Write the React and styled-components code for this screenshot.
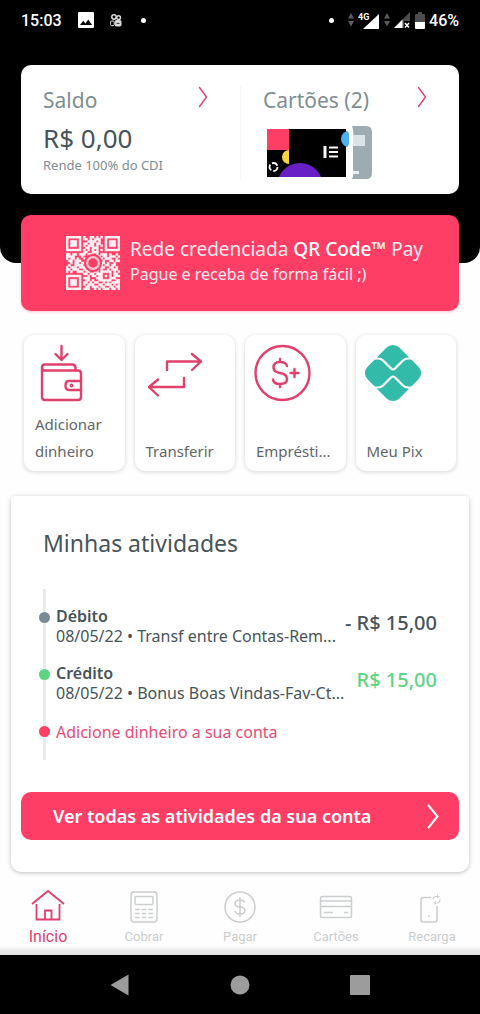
import React from "react";
import styled, { createGlobalStyle, ThemeProvider } from "styled-components";

const theme = {
  colors: {
    pink: "#ff3e66",
    icon: "#e0406c",
    dark: "#47545a",
    gray: "#808d91",
    text: "#636669",
    muted: "#cbcdce",
    green: "#5fd384",
    slate: "#7b8997",
    line: "#e9eaec",
    page: "#fefefe",
  },
};

const GlobalStyle = createGlobalStyle`
  * {
    box-sizing: border-box;
  }

  body {
    margin: 0;
    background: ${theme.colors.page};
    font-family: "Noto Sans", "Open Sans", sans-serif;
  }

  button {
    border: 0;
    padding: 0;
    font: inherit;
    text-align: left;
    cursor: pointer;
  }

  a {
    text-decoration: none;
  }

  h1, h2, p, ul {
    margin: 0;
    padding: 0;
  }

  svg {
    display: block;
    flex-shrink: 0;
  }
`;

const Header = styled.header`
  background: black;
  border-radius: 0 0 16px 16px;
  padding: 0 21px 69px;
`;

const StatusBar = styled.div`
  display: flex;
  align-items: center;
  justify-content: space-between;
  height: 40px;
  margin-bottom: 25px;
  color: white;
  font-family: Roboto, sans-serif;
  font-size: 16px;
  font-weight: 500;
`;

const StatusGroup = styled.div`
  display: flex;
  align-items: center;
  gap: ${({ $gap }) => $gap}px;
`;

const StatusDot = styled.span`
  width: 5px;
  height: 5px;
  border-radius: 50%;
  background: white;
  margin: 0 ${({ $space }) => $space}px;
`;

const Summary = styled.section`
  display: grid;
  grid-template-columns: 1fr 1fr;
  height: 129px;
  padding: 21px 0;
  background: white;
  border-radius: 10px;
`;

const SummaryItem = styled.a`
  display: flex;
  flex-direction: column;
  padding: 0 32px 0 22px;
  border-left: ${({ $side }) => ($side === "left" ? 0 : 1)}px solid #f5f6f7;
`;

const SummaryTop = styled.div`
  display: flex;
  align-items: flex-start;
  justify-content: space-between;
`;

const SummaryTitle = styled.h2`
  color: ${({ theme }) => theme.colors.gray};
  font-size: 21px;
  font-weight: 400;
  line-height: 28px;
`;

const Balance = styled.p`
  margin-top: 6px;
  color: ${({ theme }) => theme.colors.dark};
  font-size: 26px;
  line-height: 36px;
`;

const Yield = styled.p`
  color: ${({ theme }) => theme.colors.gray};
  font-size: 13px;
  line-height: 18px;
`;

const CardArt = styled.svg`
  margin: 11px 0 0 4px;
`;

const Banner = styled.a`
  display: flex;
  align-items: center;
  gap: 10px;
  height: 96px;
  margin: -48px 21px 24px;
  padding: 0 20px 0 45px;
  background: ${({ theme }) => theme.colors.pink};
  border-radius: 10px;
  box-shadow: 0 1px 3px rgba(255, 62, 102, 0.3);
  color: #ffe9ee;
`;

const BannerBody = styled.div`
  padding-bottom: 4px;
  white-space: nowrap;
`;

const BannerTitle = styled.p`
  font-size: 19px;
  line-height: 26px;

  strong {
    color: white;
    font-weight: 500;
  }
`;

const BannerText = styled.p`
  font-size: 16px;
  line-height: 24px;
`;

const Actions = styled.nav`
  display: grid;
  grid-template-columns: repeat(4, 1fr);
  gap: 10px;
  margin: 0 24px 25px;
`;

const ActionButton = styled.button`
  display: flex;
  flex-direction: column;
  justify-content: space-between;
  min-width: 0;
  height: 136px;
  padding: 8px 8px 6px;
  background: white;
  border-radius: 10px;
  box-shadow: 0 1px 4px rgba(40, 30, 50, 0.18);
  color: ${({ theme }) => theme.colors.text};
  font-size: 15px;
  line-height: 27px;

  span {
    padding-left: 3px;
  }
`;

const Activities = styled.section`
  margin: 0 11px;
  padding: 0 10px 32px;
  background: white;
  border-radius: 4px 4px 10px 10px;
  box-shadow: 0 1px 4px rgba(30, 30, 40, 0.28);
`;

const ActivitiesTitle = styled.h1`
  padding: 30px 22px 29px;
  color: ${({ theme }) => theme.colors.dark};
  font-size: 23px;
  font-weight: 400;
  line-height: 34px;
`;

const Timeline = styled.ul`
  list-style: none;
  margin: 0 22px 32px;
  padding: 17px 0 16px 10px;
  border-left: 3px solid ${({ theme }) => theme.colors.line};
`;

const TimelineItem = styled.li`
  position: relative;
  display: flex;
  justify-content: space-between;
  height: ${({ $last }) => ($last ? 24 : 40)}px;
  margin-bottom: ${({ $last }) => ($last ? 0 : 17)}px;
  color: ${({ theme }) => theme.colors.dark};
  font-size: 16px;
  line-height: 20px;
  white-space: nowrap;

  &::before {
    content: "";
    position: absolute;
    left: -17px;
    top: 6px;
    width: 11px;
    height: 11px;
    border-radius: 50%;
    background: ${({ theme, $dot }) => theme.colors[$dot]};
  }

  strong {
    display: block;
    font-weight: 600;
  }

  a {
    color: #e84b74;
    line-height: 24px;
  }
`;

const Amount = styled.span`
  color: ${({ theme, $credit }) =>
    $credit ? theme.colors.green : theme.colors.dark};
  font-size: 20px;
  font-weight: 500;
  line-height: 34px;
`;

const AllButton = styled.button`
  display: flex;
  align-items: center;
  justify-content: space-between;
  width: 100%;
  height: 48px;
  padding: 0 20px 0 32px;
  background: ${({ theme }) => theme.colors.pink};
  border-radius: 10px;
  color: white;
  font-size: 18px;
  font-weight: 600;
  white-space: nowrap;
`;

const TabBar = styled.nav`
  display: grid;
  grid-template-columns: repeat(5, 1fr);
  height: 83px;
  padding-top: 15px;
  background: linear-gradient(
    transparent 74px,
    #ececec 78px,
    #e2e2e2 83px
  );
`;

const Tab = styled.a`
  display: flex;
  flex-direction: column;
  align-items: center;
  gap: 4px;
  color: ${({ theme, $active }) =>
    $active ? theme.colors.icon : theme.colors.muted};
  font-family: Roboto, sans-serif;
  font-size: ${({ $active }) => ($active ? 16 : 13)}px;
  line-height: 20px;
`;

const SystemBar = styled.footer`
  display: flex;
  align-items: center;
  justify-content: center;
  gap: 80px;
  height: 59px;
  background: black;
`;

const SystemButton = styled.button`
  display: grid;
  place-items: center;
  width: 40px;
  height: 40px;
  background: none;
`;

function Chevron({ color = "#e0406c", width = 8, height = 20, stroke = 1.4 }) {
  return (
    <svg width={width + 2} height={height + 2} viewBox={`-1 -1 ${width + 2} ${height + 2}`} fill="none" stroke={color} strokeWidth={stroke} strokeLinecap="round">
      <path d={`M0.5 0.5 L${width - 0.5} ${height / 2} L0.5 ${height - 0.5}`} />
    </svg>
  );
}

function PictureIcon() {
  return (
    <svg width="16" height="16" viewBox="0 0 16 16">
      <rect width="16" height="16" rx="1" fill="white" />
      <path d="M2 13 L5.2 8.8 L7.4 11.4 L10.3 7.5 L14 13Z" fill="black" />
    </svg>
  );
}

function CameraIcon() {
  return (
    <svg width="12" height="13" viewBox="0 0 12 13" fill="none" stroke="#ddd">
      <circle cx="4" cy="3" r="2.2" strokeWidth="1.5" />
      <circle cx="8.6" cy="3.6" r="1.9" strokeWidth="1.4" />
      <rect x="0.6" y="7" width="3.6" height="4.6" rx="1" />
      <rect x="5.2" y="6.6" width="5.8" height="5.4" rx="1" fill="#ddd" />
      <path d="M6.6 9.4h3" stroke="#333" />
    </svg>
  );
}

function DataArrows() {
  return (
    <svg width="6" height="14" viewBox="0 0 6 14" fill="#5c5c5c">
      <path d="M3 0 L6 5.5 H0Z M3 13.5 L6 8 H0Z" />
    </svg>
  );
}

function MobileSignal() {
  return (
    <svg width="22" height="17" viewBox="0 0 22 17" fill="white">
      <path d="M21 2 V17 H5Z" />
      <text x="0" y="8" fontFamily="Roboto, sans-serif" fontSize="9" fontWeight="700" stroke="black" strokeWidth="2" paintOrder="stroke">4G</text>
    </svg>
  );
}

function NoSignal() {
  return (
    <svg width="17" height="16" viewBox="0 0 17 16">
      <path d="M16 0 V9 H10 V16 H0Z" fill="#4d4d4d" />
      <path d="M8.5 7.5 V16 H0Z" fill="white" />
      <path d="M11 11 L15 15.5 M15 11 L11 15.5" stroke="white" strokeWidth="1.5" />
    </svg>
  );
}

function BatteryIcon() {
  return (
    <svg width="10" height="17" viewBox="0 0 10 17">
      <path d="M3 0 H7 V2 H9 Q10 2 10 3 V11 H0 V3 Q0 2 1 2 H3Z" fill="#4d4d4d" />
      <path d="M0 10 H10 V16 Q10 17 9 17 H1 Q0 17 0 16Z" fill="white" />
    </svg>
  );
}

function CardsPreview() {
  return (
    <CardArt width="106" height="55" viewBox="0 0 106 55">
      <defs>
        <clipPath id="front">
          <rect y="4" width="79" height="48" />
        </clipPath>
        <clipPath id="half">
          <rect y="4" width="22" height="48" />
        </clipPath>
      </defs>
      <path d="M85 1 H99 Q105 1 105 7 V48 Q105 54 99 54 H85 Q87 50 86 44 V14 Q87 6 85 1Z" fill="#9cacb1" />
      <rect x="86" y="10" width="12" height="11" fill="#dbe5e9" />
      <rect x="86" y="46" width="6" height="3" fill="#e8eff1" />
      <g clipPath="url(#front)">
        <rect y="4" width="80" height="48" fill="black" />
        <rect y="4" width="22" height="21" fill="#ff3e66" />
        <circle cx="33" cy="61" r="23" fill="#681fc4" />
        <circle cx="82" cy="14" r="8" fill="#4eb0f0" />
      </g>
      <path d="M79 6 Q82 6 82 10 V18 Q82 22 79 22Z" fill="#4eb0f0" />
      <circle cx="22" cy="32" r="7" fill="#f7d441" clipPath="url(#half)" />
      <circle cx="6.5" cy="42" r="4" fill="none" stroke="white" strokeWidth="1.8" strokeDasharray="6.4 2" />
      <path d="M58 21 V33" stroke="white" strokeWidth="3" />
      <path d="M62 22.5 H71 M62 27 H71 M62 31.5 H71" stroke="white" strokeWidth="2" />
    </CardArt>
  );
}

const qrRows = [
  "1111111010011010101111111",
  "1000001011010111001000001",
  "1011101000111101001011101",
  "1011101011011011001011101",
  "1011101010111010101011101",
  "1000001001101110001000001",
  "1111111010101010101111111",
  "0000000011001110000000000",
  "1101101110110010111010010",
  "1111000100000001011011101",
  "1011010010000000101110010",
  "0110111000000000010011011",
  "0010110110000000110100100",
  "0100111100000000101101100",
  "1011101110000001110011010",
  "1101110011010110100101110",
  "1010011101100110111110101",
  "0000000011011011100010110",
  "1111111000101101101010111",
  "1000001011100011100011100",
  "1011101001101001111110011",
  "1011101011010110010101111",
  "1011101010111001101110101",
  "1000001001101110110011011",
  "1111111011100101011101101",
];

function QrCode() {
  const modules = qrRows
    .map((row, y) =>
      [...row].map((bit, x) => (bit === "1" ? `M${x} ${y}h1v1h-1z` : "")).join("")
    )
    .join("");

  return (
    <svg width="54" height="54" viewBox="0 0 25 25">
      <path d={modules} fill="#fff1f4" stroke="#fff1f4" strokeWidth="0.16" />
      <circle cx="12.5" cy="12.5" r="4.2" fill={theme.colors.pink} />
      <circle cx="12.5" cy="12.5" r="2.7" fill="none" stroke="#ffc6d2" strokeWidth="1" />
    </svg>
  );
}

const outline = {
  fill: "none",
  stroke: theme.colors.icon,
  strokeWidth: 2.4,
  strokeLinecap: "round",
  strokeLinejoin: "round",
};

function WalletIcon() {
  return (
    <svg width="60" height="60" viewBox="0 0 60 60" {...outline}>
      <path d="M29.5 3 V16 M23.5 11 L29.5 17 L35.5 11" />
      <path d="M10 24 Q10 21.5 13 21.5 H40 Q43.5 21.5 43.5 25 V27.5" />
      <path d="M10 24 Q10 27.5 13 27.5 H46 Q49 27.5 49 30.5 V54 Q49 57 46 57 H13 Q10 57 10 54Z" />
      <path d="M49 38 H37 Q33.5 38 33.5 42.5 Q33.5 47 37 47 H49" />
      <circle cx="39.5" cy="42.5" r="0.8" />
    </svg>
  );
}

function TransferIcon() {
  return (
    <svg width="60" height="60" viewBox="0 0 60 60" {...outline}>
      <path d="M24 27 V18.5 H58 M49 11 L58 18.5 L49 27" />
      <path d="M41 35 V44 H6 M15 36.5 L6 44 L15 52.5" />
    </svg>
  );
}

function LoanIcon() {
  return (
    <svg width="60" height="60" viewBox="0 0 60 60" {...outline}>
      <circle cx="29.5" cy="30" r="27" />
      <path d="M34 23 Q33 19 27 19 Q20.5 19 20.5 24.5 Q20.5 29 27 30 Q34 31 34 36 Q34 41 27 41 Q20.5 41 20 36.5 M27 16 V19 M27 41 V44" />
      <path d="M37.5 30 H45.5 M41.5 26 V34" />
    </svg>
  );
}

function PixIcon() {
  return (
    <svg width="60" height="60" viewBox="0 0 60 60">
      <rect x="6.5" y="7.5" width="45" height="45" rx="9" fill="#33bba9" transform="rotate(45 29 30)" />
      <path d="M8 15.5 H14 Q17 15.5 19 17.5 L26.5 25 Q29 28 31.5 25 L39 17.5 Q41 15.5 44 15.5 H50 M8 44.5 H14 Q17 44.5 19 42.5 L26.5 35 Q29 32 31.5 35 L39 42.5 Q41 44.5 44 44.5 H50" fill="none" stroke="white" strokeWidth="2.2" />
    </svg>
  );
}

function TabIcon({ children, ...rest }) {
  return (
    <svg width="36" height="36" viewBox="0 0 36 36" fill="none" stroke="currentColor" strokeWidth="1.5" {...rest}>
      {children}
    </svg>
  );
}

const tabs = [
  {
    label: "Início",
    active: true,
    icon: (
      <TabIcon strokeWidth="1.8">
        <path d="M2 17 L18 4 L34 17 M6.5 17 V32.5 H29.5 V17 M15 32 V23.5 H21.5 V32" />
      </TabIcon>
    ),
  },
  {
    label: "Cobrar",
    icon: (
      <TabIcon>
        <rect x="5" y="5" width="26" height="30" rx="3" />
        <rect x="9" y="9.5" width="18" height="8" rx="1" />
        <path d="M9 22.5 H27 M9 26.5 H27 M9 30.5 H27" strokeDasharray="4.5 2.2" />
      </TabIcon>
    ),
  },
  {
    label: "Pagar",
    icon: (
      <TabIcon>
        <circle cx="18" cy="20" r="15" />
        <path d="M23 15.5 Q22 13 18 13 Q13 13 13 16.5 Q13 19.5 18 20 Q23 20.5 23 23.5 Q23 27 18 27 Q13.5 27 13 24 M18 10 V30" />
      </TabIcon>
    ),
  },
  {
    label: "Cartões",
    icon: (
      <TabIcon>
        <rect x="2.5" y="9.5" width="31" height="21" rx="2" />
        <path d="M3 14 H33 M3 19.5 H33 M6 25.5 H15 M26 25.5 H30" />
      </TabIcon>
    ),
  },
  {
    label: "Recarga",
    icon: (
      <TabIcon>
        <path d="M17 10.5 H9 Q7 10.5 7 12.5 V33 Q7 35 9 35 H21 Q23 35 23 33 V19 M15 28.5 V30" />
        <path d="M19 12 Q19 9.5 22 9.5 H25.5 M23.5 7.5 V11 M26 12.5 Q26 16 23 16 H19.5 M21 14 V17.5" strokeWidth="1.1" />
      </TabIcon>
    ),
  },
];

const actions = [
  { label: "Adicionar dinheiro", icon: <WalletIcon /> },
  { label: "Transferir", icon: <TransferIcon /> },
  { label: "Emprésti...", icon: <LoanIcon /> },
  { label: "Meu Pix", icon: <PixIcon /> },
];

const activities = [
  {
    title: "Débito",
    detail: "08/05/22 • Transf entre Contas-Rem...",
    amount: "- R$ 15,00",
    dot: "slate",
  },
  {
    title: "Crédito",
    detail: "08/05/22 • Bonus Boas Vindas-Fav-Ct...",
    amount: "R$ 15,00",
    dot: "green",
    credit: true,
  },
];

export default function App() {
  return (
    <ThemeProvider theme={theme}>
      <GlobalStyle />
      <Header>
        <StatusBar>
          <StatusGroup $gap={16}>
            <span>15:03</span>
            <PictureIcon />
            <CameraIcon />
            <StatusDot $space={3} />
          </StatusGroup>
          <StatusGroup $gap={4}>
            <StatusDot $space={10} />
            <DataArrows />
            <MobileSignal />
            <DataArrows />
            <NoSignal />
            <BatteryIcon />
            <span>46%</span>
          </StatusGroup>
        </StatusBar>
        <Summary>
          <SummaryItem href="#saldo" $side="left">
            <SummaryTop>
              <SummaryTitle>Saldo</SummaryTitle>
              <Chevron />
            </SummaryTop>
            <Balance>R$ 0,00</Balance>
            <Yield>Rende 100% do CDI</Yield>
          </SummaryItem>
          <SummaryItem href="#cartoes" $side="right">
            <SummaryTop>
              <SummaryTitle>Cartões (2)</SummaryTitle>
              <Chevron />
            </SummaryTop>
            <CardsPreview />
          </SummaryItem>
        </Summary>
      </Header>

      <Banner href="#qrcode">
        <QrCode />
        <BannerBody>
          <BannerTitle>
            Rede credenciada <strong>QR Code™</strong> Pay
          </BannerTitle>
          <BannerText>Pague e receba de forma fácil ;)</BannerText>
        </BannerBody>
      </Banner>

      <Actions>
        {actions.map(({ label, icon }) => (
          <ActionButton key={label} type="button">
            {icon}
            <span>{label}</span>
          </ActionButton>
        ))}
      </Actions>

      <Activities>
        <ActivitiesTitle>Minhas atividades</ActivitiesTitle>
        <Timeline>
          {activities.map(({ title, detail, amount, dot, credit }) => (
            <TimelineItem key={title} $dot={dot}>
              <div>
                <strong>{title}</strong>
                {detail}
              </div>
              <Amount $credit={credit}>{amount}</Amount>
            </TimelineItem>
          ))}
          <TimelineItem $dot="pink" $last>
            <a href="#adicionar">Adicione dinheiro a sua conta</a>
          </TimelineItem>
        </Timeline>
        <AllButton type="button">
          Ver todas as atividades da sua conta
          <Chevron color="white" width={10} height={23} stroke={2} />
        </AllButton>
      </Activities>

      <TabBar>
        {tabs.map(({ label, icon, active }) => (
          <Tab key={label} href={`#${label}`} $active={active}>
            {icon}
            {label}
          </Tab>
        ))}
      </TabBar>

      <SystemBar>
        <SystemButton type="button" aria-label="Voltar">
          <svg width="20" height="22" viewBox="0 0 20 22" fill="#9c9c9c">
            <path d="M18.5 0.5 V21.5 L0.5 11Z" />
          </svg>
        </SystemButton>
        <SystemButton type="button" aria-label="Tela inicial">
          <svg width="20" height="20" viewBox="0 0 20 20" fill="#9c9c9c">
            <circle cx="10" cy="10" r="9.5" />
          </svg>
        </SystemButton>
        <SystemButton type="button" aria-label="Recentes">
          <svg width="20" height="20" viewBox="0 0 20 20" fill="#9c9c9c">
            <rect width="20" height="20" rx="1" />
          </svg>
        </SystemButton>
      </SystemBar>
    </ThemeProvider>
  );
}
